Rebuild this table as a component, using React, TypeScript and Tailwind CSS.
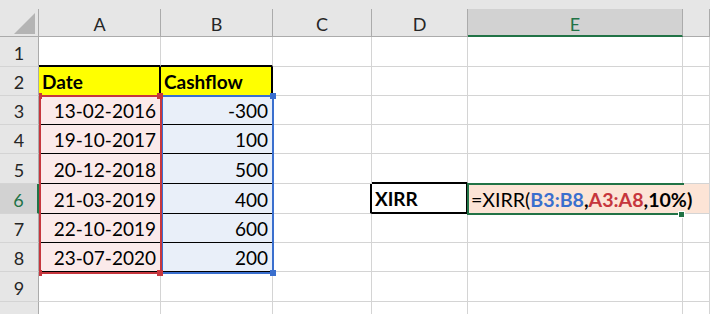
import React from "react";

/* sheet geometry (widths / heights include the cell's right / bottom line) */
const cols = ["A", "B", "C", "D", "E", ""];
const rowNums = [1, 2, 3, 4, 5, 6, 7, 8, 9, 10];
const template =
  "grid grid-cols-[39px_122px_112px_99px_96px_215px_1fr] grid-rows-[28px_30px_29px_29px_29px_30px_30px_29px_29px_30px_30px]";

const cashflow = [
  { date: "13-02-2016", amount: "-300" },
  { date: "19-10-2017", amount: "100" },
  { date: "20-12-2018", amount: "500" },
  { date: "21-03-2019", amount: "400" },
  { date: "22-10-2019", amount: "600" },
  { date: "23-07-2020", amount: "200" },
];

const grid = "border-r border-b border-[#d4d4d4]";
const rowHead =
  "flex items-center justify-center pt-[3px] bg-[#e6e6e6] border-r border-b border-r-[#ababab] border-b-[#d4d4d4] text-[18px] text-[#262626]";

function Cell({ row, col }: { row: number; col: number }) {
  // A1 / B1: bottom edge is the top border of the header cells
  if (row === 1 && col < 2) {
    return <div className="border-r border-[#d4d4d4] border-b-2 border-b-black" />;
  }

  if (row === 2 && col === 0) {
    return (
      <div className="flex items-center pl-[3px] pt-[3px] bg-[#ffff00] border-r-2 border-r-black border-b border-b-black font-bold text-[19px] text-black">
        Date
      </div>
    );
  }
  if (row === 2 && col === 1) {
    return (
      <div className="flex items-center pl-[3px] pt-[3px] bg-[#ffff00] border-r-2 border-r-black border-b border-b-black font-bold text-[19px] text-black">
        Cashflow
      </div>
    );
  }

  if (row >= 3 && row <= 8 && col === 0) {
    return (
      <div className="flex items-center justify-end pr-[4px] pt-[3px] bg-[#fbeaea] border-r border-b border-black text-[19px] text-black">
        {cashflow[row - 3].date}
      </div>
    );
  }
  if (row >= 3 && row <= 8 && col === 1) {
    return (
      <div className="flex items-center justify-end pr-[4px] pt-[3px] bg-[#e9eff9] border-r border-b border-black text-[19px] text-black">
        {cashflow[row - 3].amount}
      </div>
    );
  }

  // XIRR label box
  if (row === 5 && col === 3) {
    return <div className="border-r border-[#d4d4d4] border-b-2 border-b-black" />;
  }
  if (row === 6 && col === 2) {
    return <div className="border-b border-[#d4d4d4] border-r-2 border-r-black" />;
  }
  if (row === 6 && col === 3) {
    return (
      <div className="flex items-center pl-[3px] pt-[3px] border-r-2 border-b-2 border-black font-bold text-[19px] text-black">
        XIRR
      </div>
    );
  }

  // formula spills over into F6
  if (row === 6 && col === 4) {
    return (
      <div className="flex items-center pl-[3px] pt-[3px] bg-[#fce4d6] border-b border-[#d4d4d4] text-[19.6px] text-black whitespace-nowrap overflow-visible">
        <span className="relative z-10">
          <span>=XIRR(</span>
          <span className="font-bold text-[#3a6fce]">B3:B8</span>
          <span className="font-bold">,</span>
          <span className="font-bold text-[#c6363d]">A3:A8</span>
          <span className="font-bold">,10%)</span>
        </span>
      </div>
    );
  }
  if (row === 6 && col === 5) {
    return <div className={`${grid} bg-[#fce4d6]`} />;
  }

  return <div className={grid} />;
}

export default function App() {
  return (
    <div className="w-[710px] h-[314px] overflow-hidden bg-white font-['Lato',sans-serif]">
      <div className="h-[9px] bg-[#e6e6e6]" />

      <div className="relative">
        <div className={template}>
          {/* select-all corner */}
          <div className="relative bg-[#e6e6e6] border-r border-b border-[#ababab]">
            <svg className="absolute left-0 top-0" width="38" height="27">
              <polygon points="14,25 35,4 35,25" fill="#b4b4b4" />
            </svg>
          </div>

          {cols.map((c, i) =>
            c === "E" ? (
              <div
                key={i}
                className="flex items-center justify-center pt-[4px] bg-[#d2d2d2] border-r border-r-[#ababab] border-b-2 border-b-[#217346] text-[18px] text-[#217346]"
              >
                {c}
              </div>
            ) : (
              <div
                key={i}
                className="flex items-center justify-center pt-[4px] bg-[#e6e6e6] border-r border-b border-[#ababab] text-[18px] text-[#262626]"
              >
                {c}
              </div>
            )
          )}

          {rowNums.map((r) => (
            <React.Fragment key={r}>
              {r === 6 ? (
                <div className="flex items-center justify-center pt-[3px] bg-[#d2d2d2] border-b border-b-[#d4d4d4] border-r-2 border-r-[#217346] text-[18px] text-[#217346]">
                  {r}
                </div>
              ) : (
                <div className={rowHead}>{r < 10 ? r : ""}</div>
              )}
              {cols.map((_, ci) => (
                <Cell key={ci} row={r} col={ci} />
              ))}
            </React.Fragment>
          ))}
        </div>

        {/* formula range highlights and the active cell, laid on the same grid */}
        <div className={`absolute inset-0 pointer-events-none ${template}`}>
          <div className="relative col-start-3 row-start-4 row-end-10 -mt-[1px] -mr-[1px] -mb-[2px] border-2 border-[#3a6fce]">
            <span className="absolute -right-[4px] -top-[4px] w-[6px] h-[6px] bg-[#3a6fce]" />
            <span className="absolute -right-[4px] -bottom-[4px] w-[6px] h-[6px] bg-[#3a6fce]" />
          </div>

          <div className="relative col-start-2 row-start-4 row-end-10 -mt-[1px] -mr-[1px] -mb-[2px] border-2 border-[#c6363d]">
            <span className="absolute -left-[2px] -top-[4px] w-[3px] h-[6px] bg-[#c6363d]" />
            <span className="absolute -right-[3px] -top-[4px] w-[6px] h-[6px] bg-[#c6363d]" />
            <span className="absolute -left-[2px] -bottom-[4px] w-[3px] h-[6px] bg-[#c6363d]" />
            <span className="absolute -right-[3px] -bottom-[4px] w-[6px] h-[6px] bg-[#c6363d]" />
          </div>

          {/* active cell: no right edge, the text runs past it */}
          <div className="relative col-start-6 row-start-7 -m-[1px] border-2 border-r-0 border-[#217346]">
            <span className="absolute -right-[1px] -bottom-[5px] w-[7px] h-[7px] bg-[#217346] border border-white" />
          </div>
        </div>
      </div>
    </div>
  );
}
